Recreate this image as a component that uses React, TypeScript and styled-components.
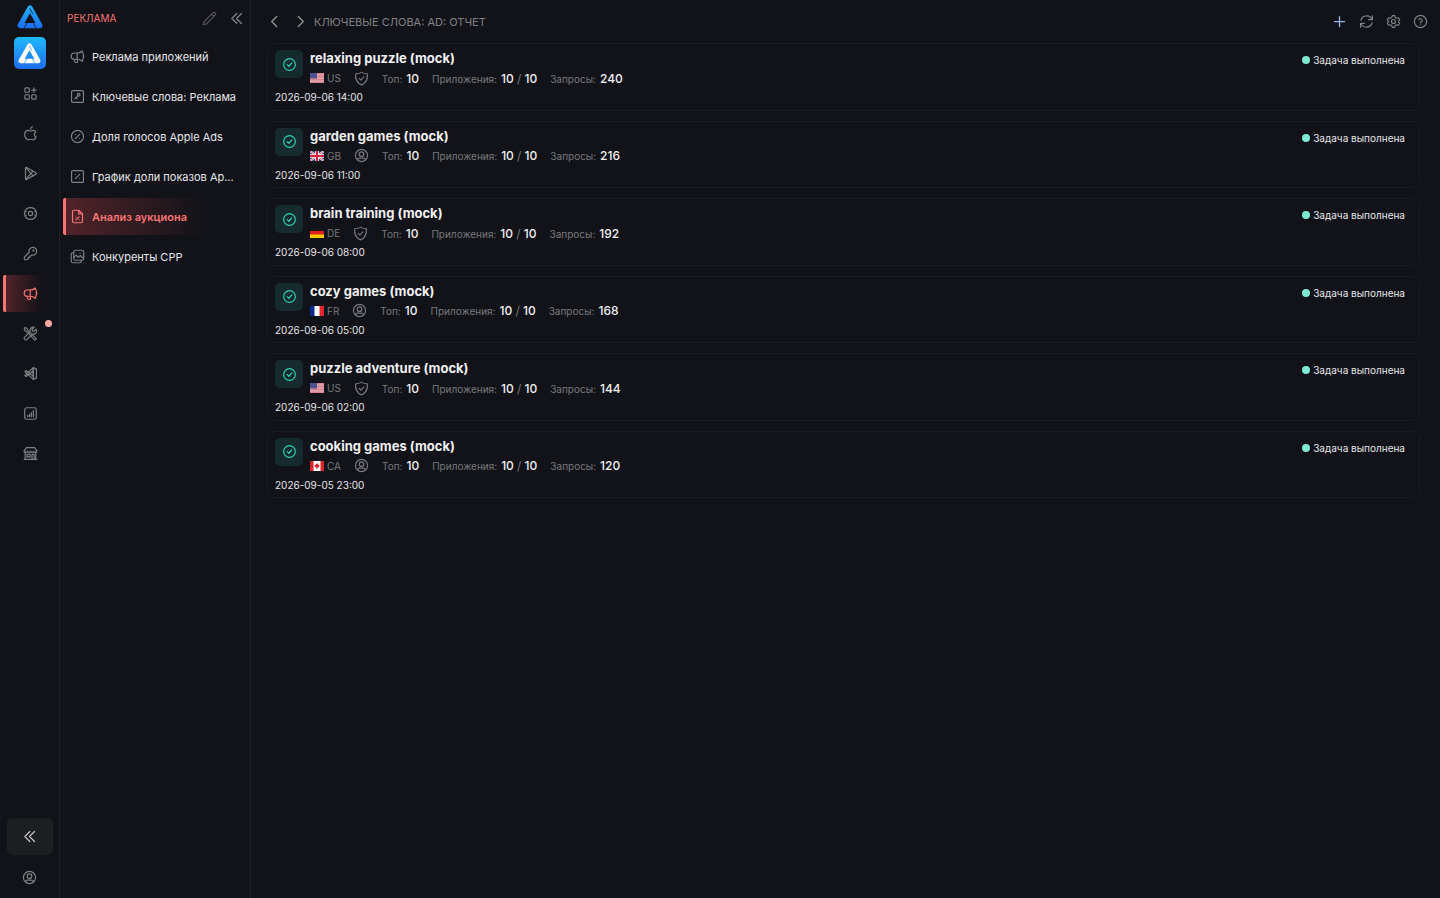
import React from 'react';
import styled, { createGlobalStyle, css } from 'styled-components';

const color = {
  bg: '#121318',
  line: '#1f2025',
  cardLine: '#1b1c22',
  text: '#e6e6ea',
  strong: '#f1f1f4',
  muted: '#77787d',
  icon: '#7f8085',
  accent: '#f87474',
  mint: '#7ee8d3',
  teal: '#2fd3b5',
};

const GlobalStyle = createGlobalStyle`
  *, *::before, *::after { box-sizing: border-box; }
  body {
    margin: 0;
    background: ${color.bg};
    color: ${color.text};
    font-family: Inter, "Noto Sans", sans-serif;
    font-size: 11px;
  }
  button { font: inherit; color: inherit; background: none; border: 0; padding: 0; cursor: pointer; }
  a { color: inherit; text-decoration: none; }
  ul { list-style: none; margin: 0; padding: 0; }
  h1, h2, p, dl, dd, dt { margin: 0; font: inherit; }
`;

/* ---------- icons ---------- */

const Svg = styled.svg`
  display: block;
  flex: none;
  width: 15px;
  height: 15px;
  fill: none;
  stroke: currentColor;
  stroke-width: 1.9;
  stroke-linecap: round;
  stroke-linejoin: round;
`;

const Icon = ({ children }: { children: React.ReactNode }) => (
  <Svg viewBox="0 0 24 24" aria-hidden="true">
    {children}
  </Svg>
);

const GridPlusIcon = () => (
  <Icon>
    <rect x="3" y="3" width="7" height="7" rx="1.500" />
    <rect x="3" y="14" width="7" height="7" rx="1.500" />
    <rect x="14" y="14" width="7" height="7" rx="1.500" />
    <path d="M17.500 3v7M14 6.500h7" />
  </Icon>
);
const AppleIcon = () => (
  <Icon>
    <path d="M20.300 10c-1.500.8-2.300 2-2.300 3.400 0 1.700 1.100 3 2.800 3.700-.9 2.600-2.800 4.900-4.700 4.900-1.400 0-2-.8-3.800-.8s-2.400.8-3.800.8c-2.800 0-5.800-4.300-5.800-8.600 0-4 2.500-6.300 5.400-6.300 1.700 0 2.900 1 4.200 1s2.600-1.100 4.500-1.100c1.400 0 2.800.8 3.500 3z" />
    <path d="M12.200 5c0-1.900 1.100-3.200 2.800-3.500" />
  </Icon>
);
const PlayStoreIcon = () => (
  <Icon>
    <path d="M4 3.300c0-.9.900-1.400 1.700-1l15 8.600c.8.500.8 1.600 0 2.100l-15 8.700c-.8.400-1.700-.1-1.700-1z" />
    <path d="M4.500 2.700 16 15.700M4.500 21.300 16 8.300" />
  </Icon>
);
const EyeOrbitIcon = () => (
  <Icon>
    <circle cx="12" cy="12" r="3.500" />
    <path d="M3 8.500C4.500 5 8 2.700 12 2.700s7.500 2.300 9 5.800M21 15.500c-1.500 3.500-5 5.800-9 5.800s-7.500-2.300-9-5.800" />
    <path d="M5 15.500C3 14 2 12.800 2 12s1-2 3-3.500M19 8.500c2 1.500 3 2.700 3 3.500s-1 2-3 3.500" />
  </Icon>
);
const KeyIcon = () => (
  <Icon>
    <path d="M15.600 2.200a6.200 6.200 0 1 1-1.500 12.200l-1.300 1.300-1.900.3-.3 2.100-2 .2-.3 2.100-1.100 1.100c-.3.300-.7.500-1.200.5H3.300c-.7 0-1.200-.5-1.200-1.200v-2.200c0-.4.200-.9.500-1.200L9.800 10a6.200 6.200 0 0 1 5.800-7.800z" />
    <circle cx="16.700" cy="7.300" r=".8" />
  </Icon>
);
const MegaphoneIcon = () => (
  <Icon>
    <path d="M19.500 3.200c-1.900 2-4.500 3.200-7.500 3.200H7a5 5 0 0 0 0 10h5c3 0 5.600 1.200 7.500 3.200 1.300-2.600 2-5.400 2-8.200s-.7-5.600-2-8.200z" />
    <path d="M11.500 6.400v10M6.500 16.400l1.400 4.100c.2.700.8 1.100 1.500 1.100h1.300c1 0 1.700-.9 1.500-1.900l-.7-3.300M21.500 10.300a1.200 1.200 0 0 1 0 2.200" />
  </Icon>
);
const ToolsIcon = () => (
  <Icon>
    <path d="M3 2.500 6.500 4l1.200 3L20.500 19.500a1.600 1.600 0 0 1-2.300 2.300L6 9 3.300 7.500 2 4z" />
    <path d="M20.800 5.200 17.700 8.300l-2.500-.6-.6-2.500 3.100-3.100a5.200 5.200 0 0 0-6.200 7l-8.700 8.700a2.600 2.600 0 0 0 3.700 3.700l8.700-8.700a5.200 5.200 0 0 0 6.400-6.500z" />
  </Icon>
);
const CodeEditorIcon = () => (
  <Icon>
    <path d="M16.500 2.500 21.500 5v14l-5 2.500L3 8.800l2-1.700 11.500 9.200z" />
    <path d="M16.500 2.500 3 15.200l2 1.700L16.500 7.700zM16.500 2.500v19" />
  </Icon>
);
const ChartIcon = () => (
  <Icon>
    <rect x="2.800" y="2.800" width="18.400" height="18.400" rx="3" />
    <path d="M7.500 17v-2M10.500 17v-4M13.500 17v-6.500M16.700 17V7.500" strokeWidth="2" />
  </Icon>
);
const StoreIcon = () => (
  <Icon>
    <path d="M5.500 2.500h13L22 7.500V10H2V7.500zM3.500 10v11.500M20.500 10v11.500M2 21.500h20" />
    <path d="M2 7.500c0 2.800 5 2.800 5 0 0 2.800 5 2.800 5 0 0 2.800 5 2.800 5 0 0 2.800 5 2.800 5 0" strokeWidth="1.200" />
    <path d="M6.500 13.500h5v4h-5zM14.500 21.500v-8h3.500v8" />
  </Icon>
);
const KeywordIcon = () => (
  <Icon>
    <rect x="2.500" y="2.500" width="19" height="19" rx="2" />
    <circle cx="13.800" cy="9.300" r="2.200" />
    <path d="m12.200 11-4.500 4.700M9.700 13.600l1.800 1.800" />
  </Icon>
);
const PercentCircleIcon = () => (
  <Icon>
    <circle cx="12" cy="12" r="9.700" />
    <path d="m15.500 8.500-7 7M8.700 8.800h.1M15.200 15.200h.1" />
  </Icon>
);
const PercentSquareIcon = () => (
  <Icon>
    <rect x="2.500" y="2.500" width="19" height="19" rx="2" />
    <path d="m15.500 8.500-7 7M8.700 8.800h.1M15.200 15.200h.1" />
  </Icon>
);
const PercentFileIcon = () => (
  <Icon>
    <path d="M14 2H6.500A2.500 2.500 0 0 0 4 4.500v15A2.500 2.500 0 0 0 6.500 22h11a2.500 2.500 0 0 0 2.500-2.500V8zM14 2v6h6" />
    <path d="m14.500 12.500-5 5M9.500 12.800h.1M14.500 17.200h.1" />
  </Icon>
);
const GalleryIcon = () => (
  <Icon>
    <rect x="6" y="2" width="16" height="16" rx="3" />
    <path d="M6 6H4.500C3 6 2 7 2 8.500v11C2 21 3 22 4.500 22h11c1.500 0 2.500-1 2.500-2.500V18M6.500 13l3.500-3.200 3 3.700 3.500-3 5 4.500M16 6.500h.1" />
  </Icon>
);
const PencilIcon = () => (
  <Icon>
    <path d="M17.800 2.600a2 2 0 0 1 2.900 0l.7.700a2 2 0 0 1 0 2.900L7 20.500 2 22l1.500-5zM15.500 5l3.500 3.500" />
  </Icon>
);
const ChevronsLeftIcon = () => (
  <Icon>
    <path d="m12.500 4-8 8 8 8M20 4l-8 8 8 8" />
  </Icon>
);
const ChevronLeftIcon = () => (
  <Icon>
    <path d="m15.500 4-8 8 8 8" />
  </Icon>
);
const ChevronRightIcon = () => (
  <Icon>
    <path d="m8.500 4 8 8-8 8" />
  </Icon>
);
const UserCircleIcon = () => (
  <Icon>
    <circle cx="12" cy="12" r="9.700" />
    <circle cx="12" cy="9.800" r="3.600" />
    <path d="M5.500 18.800c.5-1.700 1.900-2.700 3.500-2.700h6c1.600 0 3 1 3.500 2.700" />
  </Icon>
);
const ShieldIcon = () => (
  <Icon>
    <path d="M12 1.800c2.700 2 5.800 2.800 9.300 2.600.9 7.600-1.900 14.500-9.300 17.800C4.600 18.900 1.800 12 2.700 4.400 6.200 4.600 9.300 3.800 12 1.800z" />
    <path d="m8.300 11.800 2.700 2.700 4.800-5" />
  </Icon>
);
const CheckCircleIcon = () => (
  <Icon>
    <circle cx="12" cy="12" r="9.300" />
    <path d="m8.300 12.300 2.700 2.500 4.700-5.300" />
  </Icon>
);
const PlusIcon = () => (
  <Icon>
    <path d="M12 4v16M4 12h16" strokeWidth="2" />
  </Icon>
);
const RefreshIcon = () => (
  <Icon>
    <path d="M21.500 3v6h-6M2.500 21v-6h6M21 9a9.500 9.500 0 0 0-18 1M3 15a9.500 9.500 0 0 0 18-1" />
  </Icon>
);
const GearIcon = () => (
  <Icon>
    <path d="M10 2.500h4l.8 3 2.200 1.300 3-.8 2 3.500-2.200 2.200v.6L22 14.500 20 18l-3-.8-2.200 1.300-.8 3h-4l-.8-3L7 17.200 4 18l-2-3.500 2.200-2.200v-.6L2 9.500 4 6l3 .8 2.200-1.300z" />
    <circle cx="12" cy="12" r="3.200" />
  </Icon>
);
const HelpIcon = () => (
  <Icon>
    <circle cx="12" cy="12" r="9.700" />
    <path d="M9.300 9.300a2.800 2.800 0 0 1 5.400.8c0 1.900-2.700 2.400-2.700 4M12 17.200h.1" />
  </Icon>
);

/* Three bars joined into a triangle, with thin slits where they meet. */
const LogoShape = ({ paint, slit }: { paint: string; slit: string }) => (
  <g fill="none" strokeLinecap="round" strokeLinejoin="round">
    <path d="M12.500 2.800 3 19.700h19z" stroke={paint} strokeWidth="5" />
    <path d="M6.600 22.600 9.800 17M18.600 22.600 15.500 17M15.300 8.500 12 2.900" stroke={slit} strokeWidth=".9" strokeLinecap="butt" opacity=".85" />
  </g>
);

const BrandSvg = styled.svg`
  display: block;
  width: 26px;
  height: 24px;
`;

const TileSvg = styled.svg`
  display: block;
  width: 23px;
  height: 21px;
`;

const BrandLogo = () => (
  <BrandSvg viewBox="0 0 25 23" aria-hidden="true">
    <defs>
      <linearGradient id="brand" x1="0" y1="0" x2="0" y2="23" gradientUnits="userSpaceOnUse">
        <stop offset="0" stopColor="#22b4fb" />
        <stop offset="1" stopColor="#1c6cf2" />
      </linearGradient>
    </defs>
    <LogoShape paint="url(#brand)" slit={color.bg} />
  </BrandSvg>
);

/* ---------- flags ---------- */

const FlagSvg = styled.svg`
  display: block;
  width: 14px;
  height: 10px;
`;

const flags: Record<string, React.ReactNode> = {
  US: (
    <>
      <path fill="#e3b9c0" d="M0 0h28v20H0z" />
      <path stroke="#d5707c" strokeWidth="1.500" d="M0 1h28M0 4h28M0 7h28M0 10h28M0 13h28M0 16h28M0 19h28" />
      <path fill="#4a5290" d="M0 0h14v11H0z" />
    </>
  ),
  GB: (
    <>
      <path fill="#1d3a80" d="M0 0h28v20H0z" />
      <path stroke="#fff" strokeWidth="4" d="m0 0 28 20M28 0 0 20" />
      <path stroke="#d8203a" strokeWidth="1.500" d="m0 0 28 20M28 0 0 20" />
      <path stroke="#fff" strokeWidth="7" d="M14 0v20M0 10h28" />
      <path stroke="#d8203a" strokeWidth="4" d="M14 0v20M0 10h28" />
    </>
  ),
  DE: (
    <>
      <path fill="#151515" d="M0 0h28v7H0z" />
      <path fill="#e01f1f" d="M0 6h28v8H0z" />
      <path fill="#fc0" d="M0 13h28v7H0z" />
    </>
  ),
  FR: (
    <>
      <path fill="#fff" d="M0 0h28v20H0z" />
      <path fill="#0a2a92" d="M0 0h9v20H0z" />
      <path fill="#e5252e" d="M19 0h9v20h-9z" />
    </>
  ),
  CA: (
    <>
      <path fill="#fff" d="M0 0h28v20H0z" />
      <path fill="#d8232a" d="M0 0h7v20H0zM21 0h7v20h-7zM14 4l2 3 3 1-1 4-3 1v3h-2v-3l-3-1-1-4 3-1z" />
    </>
  ),
};

/* ---------- layout ---------- */

const Page = styled.div`
  display: grid;
  grid-template-columns: 60px 191px minmax(0, 1fr);
  min-height: 100vh;
`;

const Rail = styled.nav`
  display: flex;
  flex-direction: column;
  border-right: 1px solid ${color.line};
  padding-top: 5px;
`;

const BrandLink = styled.a`
  align-self: center;
  display: block;
`;

const AppTile = styled.button`
  align-self: center;
  display: grid;
  place-items: center;
  width: 32px;
  height: 32px;
  margin: 8px 0 6px;
  border-radius: 5px;
  background: linear-gradient(#1fb9fb, #1f6df0);
`;

const RailList = styled.ul`
  display: flex;
  flex-direction: column;
  gap: 3px;
`;

const RailItem = styled.button<{ $active?: boolean }>`
  position: relative;
  display: grid;
  place-items: center;
  width: 54px;
  height: 37px;
  margin-left: 3px;
  border-left: 3px solid transparent;
  padding-right: 3px;
  border-radius: 2px;
  color: ${color.icon};
  ${(p) => p.$active && css`
    color: ${color.accent};
    border-left-color: ${color.accent};
    background: linear-gradient(90deg, #51232a, ${color.bg} 70%);
  `}
`;

const Badge = styled.span`
  position: absolute;
  top: 5px;
  right: 5px;
  width: 7px;
  height: 7px;
  border-radius: 50%;
  background: #ffa9a4;
`;

const RailFoot = styled.div`
  display: flex;
  flex-direction: column;
  align-items: center;
  gap: 15px;
  margin-top: auto;
  padding-bottom: 13px;
  color: ${color.icon};
`;

const CollapseButton = styled.button`
  display: grid;
  place-items: center;
  width: 46px;
  height: 37px;
  border-radius: 5px;
  background: #1d1e22;
  color: #c3c4c8;
`;

const Sidebar = styled.aside`
  border-right: 1px solid ${color.line};
`;

const SideHead = styled.div`
  display: flex;
  align-items: center;
  height: 36px;
  padding: 0 6px 0 7px;
  color: ${color.accent};
`;

const SideTitle = styled.h2`
  flex: 1;
  font-size: 10px;
`;

const SideAction = styled.button<{ $dim?: boolean }>`
  margin-left: 12px;
  color: ${(p) => (p.$dim ? '#55565b' : '#85868b')};
`;

const SideList = styled.ul`
  display: flex;
  flex-direction: column;
  gap: 3px;
  padding: 2px 3px 0;
`;

const SideLink = styled.a<{ $active?: boolean }>`
  display: flex;
  align-items: center;
  gap: 7px;
  height: 37px;
  padding: 0 6px 0 4px;
  border-left: 3px solid transparent;
  border-radius: 2px;

  svg { color: ${(p) => (p.$active ? color.accent : color.icon)}; }

  ${(p) => p.$active && css`
    color: ${color.accent};
    border-left-color: ${color.accent};
    font-weight: 600;
    background: linear-gradient(90deg, #51232a, ${color.bg} 75%);
  `}
`;

const SideLabel = styled.span`
  white-space: nowrap;
`;

const Main = styled.main`
  padding: 0 20px 0 16px;
`;

const TopBar = styled.header`
  display: flex;
  align-items: center;
  height: 43px;
  color: #97989c;
`;

const NavButtons = styled.div`
  display: flex;
  gap: 11px;
  margin-right: 6px;
`;

const PageTitle = styled.h1`
  flex: 1;
  color: #808186;
`;

const Tools = styled.div`
  display: flex;
  gap: 12px;
  margin-right: -8px;
`;

const ToolButton = styled.button<{ $primary?: boolean }>`
  color: ${(p) => (p.$primary ? '#9db8f5' : color.icon)};
`;

const CardList = styled.ul`
  display: grid;
  gap: 10px;
`;

const Card = styled.li`
  padding: 6px 14px 3px 7px;
  border: 1px solid ${color.cardLine};
  border-radius: 7px;
`;

const CardHead = styled.div`
  display: grid;
  grid-template-columns: 28px minmax(0, 1fr) auto;
  column-gap: 7px;
  align-items: start;
`;

const StateTile = styled.span`
  display: grid;
  place-items: center;
  height: 28px;
  border-radius: 5px;
  background: #152b2e;
  color: ${color.teal};
`;

const CardTitle = styled.h2`
  font-size: 13px;
  font-weight: 700;
  line-height: 17px;
  color: ${color.strong};
`;

const Meta = styled.div`
  display: flex;
  align-items: center;
  gap: 13px;
  height: 22px;
  font-size: 10px;
  color: ${color.muted};
`;

const Country = styled.span`
  display: flex;
  align-items: center;
  gap: 3px;
`;

const Stats = styled.dl`
  display: flex;
  gap: 13px;
`;

const Stat = styled.div`
  display: flex;
  align-items: baseline;
  gap: 4px;
`;

const Value = styled.dd`
  font-size: 12px;
  font-weight: 500;
  color: ${color.strong};

  i { font-style: normal; font-weight: 400; color: ${color.muted}; }
`;

const Status = styled.p`
  display: flex;
  align-items: center;
  gap: 3px;
  font-size: 10px;
  line-height: 20px;

  &::before {
    content: '';
    width: 8px;
    height: 8px;
    border-radius: 50%;
    background: ${color.mint};
  }
`;

const Time = styled.time`
  display: block;
  font-size: 10px;
  line-height: 1.75;
`;

/* ---------- data ---------- */

const railItems = [
  { label: 'Приложения', icon: <GridPlusIcon /> },
  { label: 'App Store', icon: <AppleIcon /> },
  { label: 'Google Play', icon: <PlayStoreIcon /> },
  { label: 'Мониторинг', icon: <EyeOrbitIcon /> },
  { label: 'Ключевые слова', icon: <KeyIcon /> },
  { label: 'Реклама', icon: <MegaphoneIcon />, active: true },
  { label: 'Инструменты', icon: <ToolsIcon />, badge: true },
  { label: 'API', icon: <CodeEditorIcon /> },
  { label: 'Отчеты', icon: <ChartIcon /> },
  { label: 'Магазин', icon: <StoreIcon /> },
];

const sideItems = [
  { label: 'Реклама приложений', icon: <MegaphoneIcon /> },
  { label: 'Ключевые слова: Реклама', icon: <KeywordIcon /> },
  { label: 'Доля голосов Apple Ads', icon: <PercentCircleIcon /> },
  { label: 'График доли показов Ap...', icon: <PercentSquareIcon /> },
  { label: 'Анализ аукциона', icon: <PercentFileIcon />, active: true },
  { label: 'Конкуренты CPP', icon: <GalleryIcon /> },
];

const tasks = [
  { name: 'relaxing puzzle (mock)', country: 'US', guard: true, queries: 240, time: '2026-09-06 14:00' },
  { name: 'garden games (mock)', country: 'GB', guard: false, queries: 216, time: '2026-09-06 11:00' },
  { name: 'brain training (mock)', country: 'DE', guard: true, queries: 192, time: '2026-09-06 08:00' },
  { name: 'cozy games (mock)', country: 'FR', guard: false, queries: 168, time: '2026-09-06 05:00' },
  { name: 'puzzle adventure (mock)', country: 'US', guard: true, queries: 144, time: '2026-09-06 02:00' },
  { name: 'cooking games (mock)', country: 'CA', guard: false, queries: 120, time: '2026-09-05 23:00' },
];

export default function App() {
  return (
    <>
      <GlobalStyle />
      <Page>
        <Rail aria-label="Разделы">
          <BrandLink href="#" aria-label="Главная">
            <BrandLogo />
          </BrandLink>
          <AppTile aria-label="Приложение">
            <TileSvg viewBox="0 0 25 23" aria-hidden="true">
              <LogoShape paint="#fff" slit="#1f8df5" />
            </TileSvg>
          </AppTile>
          <RailList>
            {railItems.map((item) => (
              <li key={item.label}>
                <RailItem $active={item.active} aria-label={item.label}>
                  {item.icon}
                  {item.badge && <Badge />}
                </RailItem>
              </li>
            ))}
          </RailList>
          <RailFoot>
            <CollapseButton aria-label="Свернуть">
              <ChevronsLeftIcon />
            </CollapseButton>
            <button aria-label="Профиль">
              <UserCircleIcon />
            </button>
          </RailFoot>
        </Rail>

        <Sidebar>
          <SideHead>
            <SideTitle>РЕКЛАМА</SideTitle>
            <SideAction $dim aria-label="Изменить">
              <PencilIcon />
            </SideAction>
            <SideAction aria-label="Скрыть меню">
              <ChevronsLeftIcon />
            </SideAction>
          </SideHead>
          <SideList>
            {sideItems.map((item) => (
              <li key={item.label}>
                <SideLink href="#" $active={item.active}>
                  {item.icon}
                  <SideLabel>{item.label}</SideLabel>
                </SideLink>
              </li>
            ))}
          </SideList>
        </Sidebar>

        <Main>
          <TopBar>
            <NavButtons>
              <button aria-label="Назад">
                <ChevronLeftIcon />
              </button>
              <button aria-label="Вперед">
                <ChevronRightIcon />
              </button>
            </NavButtons>
            <PageTitle>КЛЮЧЕВЫЕ СЛОВА: AD: ОТЧЕТ</PageTitle>
            <Tools>
              <ToolButton $primary aria-label="Добавить">
                <PlusIcon />
              </ToolButton>
              <ToolButton aria-label="Обновить">
                <RefreshIcon />
              </ToolButton>
              <ToolButton aria-label="Настройки">
                <GearIcon />
              </ToolButton>
              <ToolButton aria-label="Помощь">
                <HelpIcon />
              </ToolButton>
            </Tools>
          </TopBar>
          <CardList>
            {tasks.map((task) => (
              <Card key={task.time}>
                <CardHead>
                  <StateTile>
                    <CheckCircleIcon />
                  </StateTile>
                  <div>
                    <CardTitle>{task.name}</CardTitle>
                    <Meta>
                      <Country>
                        <FlagSvg viewBox="0 0 28 20" aria-hidden="true">
                          {flags[task.country]}
                        </FlagSvg>
                        {task.country}
                      </Country>
                      {task.guard ? <ShieldIcon /> : <UserCircleIcon />}
                      <Stats>
                        <Stat>
                          <dt>Топ:</dt>
                          <Value>10</Value>
                        </Stat>
                        <Stat>
                          <dt>Приложения:</dt>
                          <Value>
                            10 <i>/</i> 10
                          </Value>
                        </Stat>
                        <Stat>
                          <dt>Запросы:</dt>
                          <Value>{task.queries}</Value>
                        </Stat>
                      </Stats>
                    </Meta>
                  </div>
                  <Status>Задача выполнена</Status>
                </CardHead>
                <Time>{task.time}</Time>
              </Card>
            ))}
          </CardList>
        </Main>
      </Page>
    </>
  );
}
